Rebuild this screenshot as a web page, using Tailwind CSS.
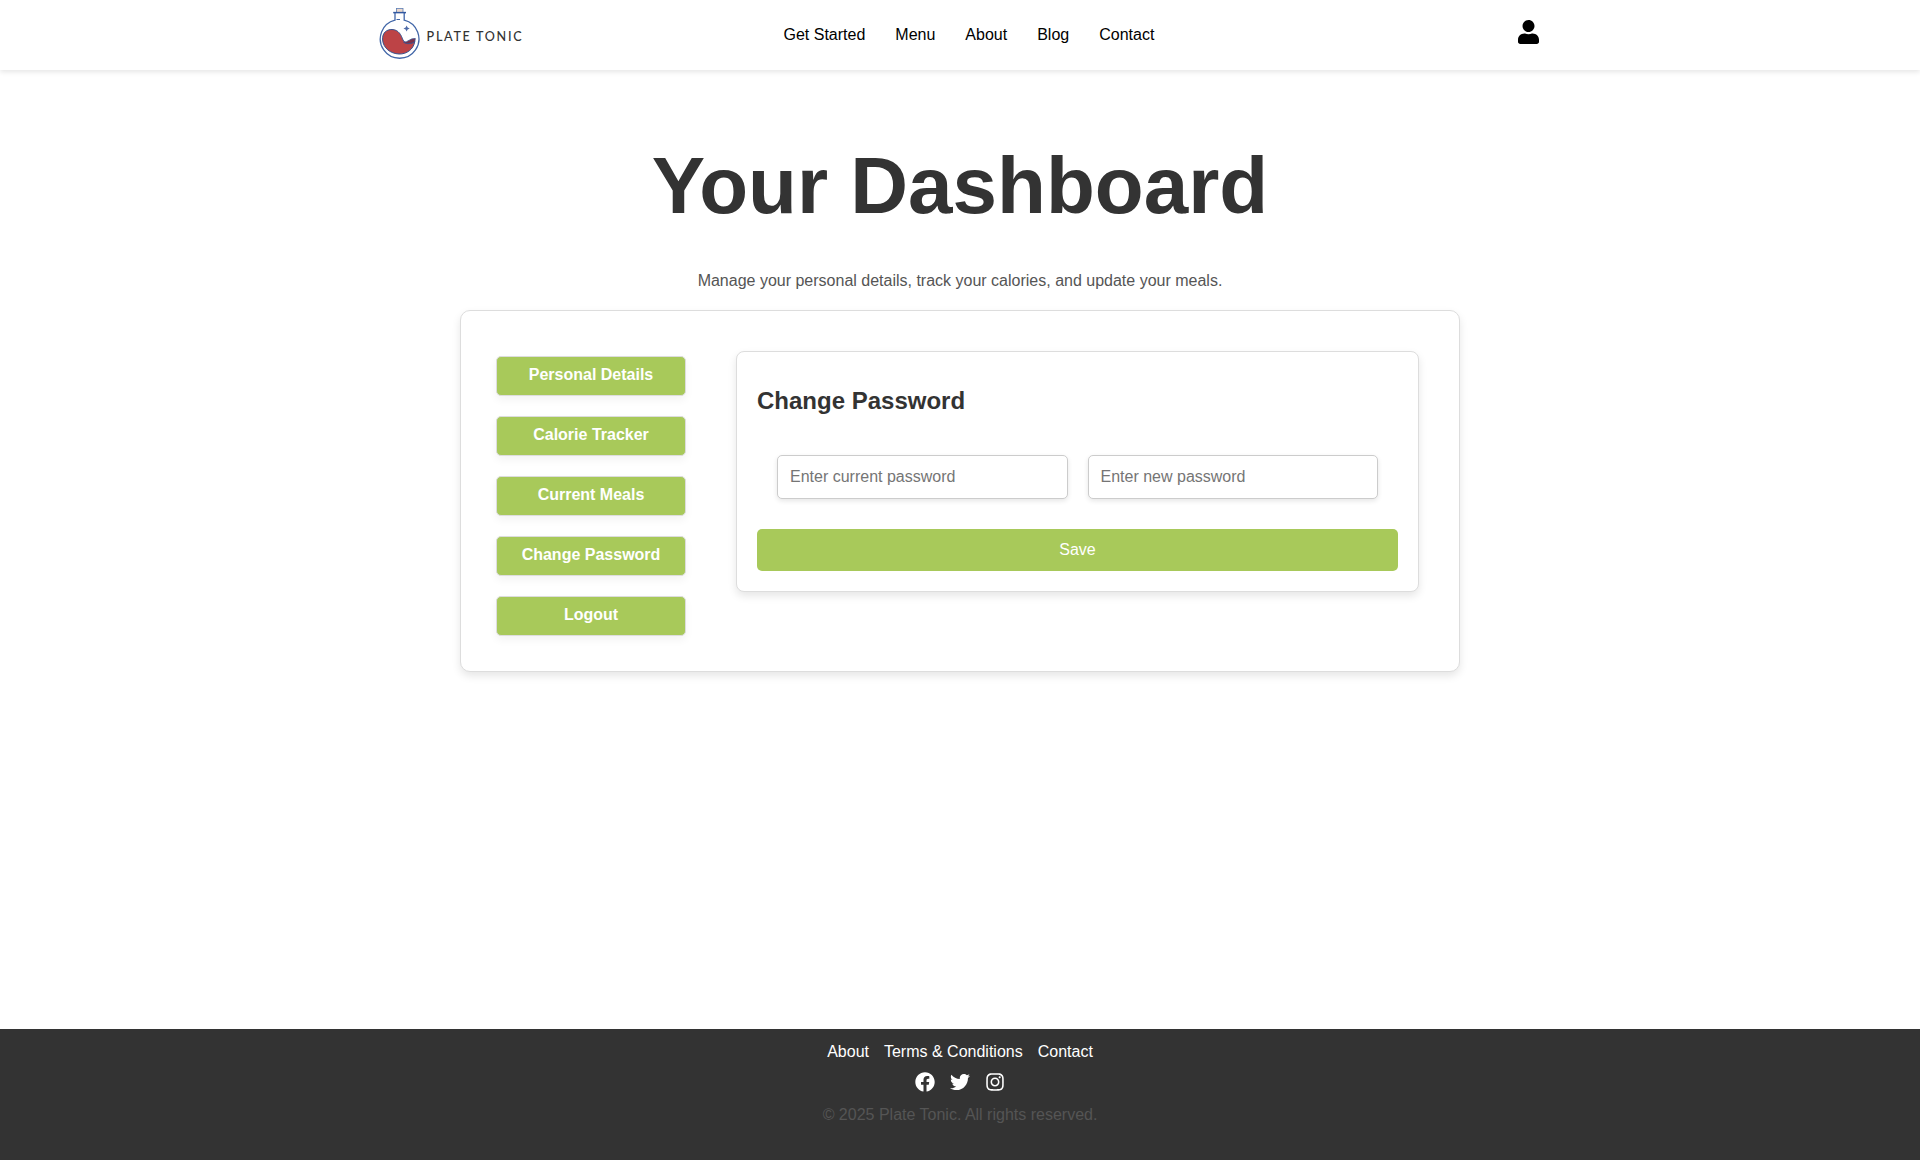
<!DOCTYPE html>
<html lang="en">
<head>
<meta charset="utf-8">
<title>Plate Tonic - Your Dashboard</title>
<script src="https://cdn.jsdelivr.net/npm/@tailwindcss/browser@4"></script>
</head>
<body class="flex min-h-screen flex-col bg-white font-['Liberation_Sans',Arial,sans-serif] text-base text-[#333]">
<header class="h-[70px] bg-white shadow-[0_2px_5px_rgba(0,0,0,0.1)]">
  <div class="mx-auto grid h-full w-[1162px] grid-cols-[404.5px_1fr_23.5px]">
    <a class="flex items-start pt-[7px]" href="#">
      <svg class="h-[52px] w-[146px]" viewBox="0 0 146 52" fill="none">
        <path d="M16 5.500V13.200A19.300 19.300 0 1 0 25.200 13.200V5.500" stroke="#4166a8" stroke-width="1.300"/>
        <rect x="17.400" y="1.500" width="6.600" height="4" fill="#ead8cc" stroke="#5c7eb5" stroke-width=".8"/>
        <path d="M14.200 5.600H27" stroke="#3158a0" stroke-width="1.500"/>
        <path d="M17.500 12.500H21" stroke="#4166a8" stroke-width="1"/>
        <path d="M3.600 33C3 25.500 8 22.300 13 22.500C20 22.800 22 28 24 33C26 37 31 37.500 35.800 34.500C34.500 42.500 27.500 47.300 20 47C11.500 46.700 4.200 41 3.600 33Z" fill="#bd4346" stroke="#39538f" stroke-width="1"/>
        <path d="M24.500 35.200C29 35.500 31 31 36.300 31.500L35.800 34.700C32 37 28 37.500 24.500 35.200Z" fill="#7d3149" stroke="#39538f" stroke-width=".8"/>
        <path d="M27.600 18.500L28.600 20.500L30.700 21.500L28.600 22.500L27.600 24.500L26.600 22.500L24.500 21.500L26.600 20.500Z" fill="#4f6ba8"/>
        <text transform="translate(47.600 34) scale(.9 1)" textLength="105.500" lengthAdjust="spacing" font-family="Lato, sans-serif" font-size="14" font-weight="500" fill="#333">PLATE TONIC</text>
      </svg>
    </a>
    <nav class="flex items-center gap-[30px] pb-px text-black">
      <a href="#">Get Started</a><a href="#">Menu</a><a href="#">About</a><a href="#">Blog</a><a href="#">Contact</a>
    </nav>
    <a href="#" class="pt-5" aria-label="Account">
      <svg class="h-6 w-[21px]" viewBox="0 0 448 512" fill="#000"><path d="M224 256c70.700 0 128-57.300 128-128S294.700 0 224 0 96 57.300 96 128s57.300 128 128 128zm89.600 32h-16.700c-22.200 10.200-46.900 16-72.900 16s-50.600-5.800-72.900-16h-16.700C60.200 288 0 348.200 0 422.400V464c0 26.500 21.500 48 48 48h352c26.500 0 48-21.500 48-48v-41.600c0-74.200-60.200-134.400-134.400-134.400z"/></svg>
    </a>
  </div>
</header>
<main class="flex grow flex-col items-center pt-[70px]">
  <h1 class="text-[80px] leading-[92px] font-bold">Your Dashboard</h1>
  <p class="mt-[40px] leading-[18px] text-[#555]">Manage your personal details, track your calories, and update your meals.</p>
  <section class="mt-[20px] flex h-[362px] w-[1000px] items-start rounded-[10px] border border-[#ddd] bg-white pt-10 pr-10 pl-[35px] shadow-[0_4px_8px_rgba(0,0,0,0.1)]">
    <nav class="mt-[5px] flex w-[190px] flex-col gap-5 text-center font-bold text-white">
      <a href="#" class="h-10 rounded-[5px] border border-[#ddd] bg-[#a8c95a] leading-[36px] shadow-[0_4px_8px_rgba(0,0,0,0.05)]">Personal Details</a>
      <a href="#" class="h-10 rounded-[5px] border border-[#ddd] bg-[#a8c95a] leading-[36px] shadow-[0_4px_8px_rgba(0,0,0,0.05)]">Calorie Tracker</a>
      <a href="#" class="h-10 rounded-[5px] border border-[#ddd] bg-[#a8c95a] leading-[36px] shadow-[0_4px_8px_rgba(0,0,0,0.05)]">Current Meals</a>
      <a href="#" class="h-10 rounded-[5px] border border-[#ddd] bg-[#a8c95a] leading-[36px] shadow-[0_4px_8px_rgba(0,0,0,0.05)]">Change Password</a>
      <a href="#" class="h-10 rounded-[5px] border border-[#ddd] bg-[#a8c95a] leading-[36px] shadow-[0_4px_8px_rgba(0,0,0,0.05)]">Logout</a>
    </nav>
    <form class="ml-[50px] flex h-[241px] w-[683px] flex-col rounded-lg border border-[#ddd] bg-white px-5 pt-[35px] shadow-[0_4px_8px_rgba(0,0,0,0.1)]">
      <h2 class="text-2xl leading-7 font-bold">Change Password</h2>
      <div class="mt-10 flex gap-5 px-5">
        <input type="password" placeholder="Enter current password" class="h-11 min-w-0 flex-1 rounded-[5px] border border-[#ccc] bg-white px-3 placeholder:text-[#757575] shadow-[0_2px_5px_rgba(0,0,0,0.1)]">
        <input type="password" placeholder="Enter new password" class="h-11 min-w-0 flex-1 rounded-[5px] border border-[#ccc] bg-white px-3 placeholder:text-[#757575] shadow-[0_2px_5px_rgba(0,0,0,0.1)]">
      </div>
      <button type="button" class="mt-[30px] h-[42px] rounded-[5px] bg-[#a8c95a] pb-px text-white">Save</button>
    </form>
  </section>
</main>
<footer class="flex h-[131px] flex-col items-center bg-[#333] pt-[14px]">
  <nav class="flex gap-[15px] leading-[18px] text-white"><a href="#">About</a><a href="#">Terms &amp; Conditions</a><a href="#">Contact</a></nav>
  <div class="mt-[11px] flex gap-[15px]">
    <svg class="h-5 w-5" viewBox="0 0 512 512" fill="#fff"><path d="M504 256C504 119 393 8 256 8S8 119 8 256c0 123.780 90.690 226.380 209.250 245V327.690h-63V256h63v-54.640c0-62.150 37-96.480 93.670-96.480 27.140 0 55.520 4.840 55.520 4.840v61h-31.280c-30.800 0-40.410 19.120-40.410 38.730V256h68.780l-11 71.690h-57.780V501C413.310 482.380 504 379.780 504 256z"/></svg>
    <svg class="h-5 w-5" viewBox="0 0 512 512" fill="#fff"><path d="M459.370 151.716c.325 4.548.325 9.097.325 13.645 0 138.720-105.583 298.558-298.558 298.558-59.452 0-114.680-17.219-161.137-47.106 8.447.974 16.568 1.299 25.340 1.299 49.055 0 94.213-16.568 130.274-44.832-46.132-.975-84.792-31.188-98.112-72.772 6.498.974 12.995 1.624 19.818 1.624 9.421 0 18.843-1.300 27.614-3.573-48.081-9.747-84.143-51.980-84.143-102.985v-1.299c13.969 7.797 30.214 12.670 47.431 13.319-28.264-18.843-46.781-51.005-46.781-87.391 0-19.492 5.197-37.360 14.294-52.954 51.655 63.675 129.300 105.258 216.365 109.807-1.624-7.797-2.599-15.918-2.599-24.040 0-57.828 46.782-104.934 104.934-104.934 30.213 0 57.502 12.670 76.670 33.137 23.715-4.548 46.456-13.320 66.599-25.340-7.798 24.366-24.366 44.833-46.132 57.827 21.117-2.273 41.584-8.122 60.426-16.243-14.292 20.791-32.161 39.308-52.628 54.253z"/></svg>
    <svg class="h-5 w-5" viewBox="0 0 448 512" fill="#fff"><path d="M224.100 141c-63.600 0-114.900 51.300-114.900 114.900s51.300 114.900 114.900 114.900S339 319.500 339 255.900 287.700 141 224.100 141zm0 189.600c-41.100 0-74.700-33.500-74.700-74.700s33.500-74.700 74.700-74.700 74.700 33.500 74.700 74.700-33.600 74.700-74.700 74.700zm146.400-194.300c0 14.900-12 26.800-26.800 26.800-14.900 0-26.800-12-26.800-26.800s12-26.800 26.800-26.800 26.800 12 26.800 26.800zm76.100 27.200c-1.700-35.900-9.900-67.700-36.200-93.900-26.200-26.200-58-34.400-93.900-36.200-37-2.100-147.900-2.100-184.900 0-35.800 1.700-67.600 9.900-93.900 36.100s-34.400 58-36.200 93.900c-2.100 37-2.100 147.900 0 184.900 1.700 35.900 9.900 67.700 36.200 93.900s58 34.400 93.900 36.200c37 2.100 147.900 2.100 184.900 0 35.900-1.700 67.700-9.900 93.900-36.200 26.200-26.200 34.400-58 36.200-93.900 2.100-37 2.100-147.800 0-184.800zM398.800 388c-7.800 19.600-22.900 34.700-42.600 42.600-29.500 11.700-99.500 9-132.100 9s-102.700 2.600-132.100-9c-19.600-7.800-34.700-22.900-42.600-42.600-11.700-29.500-9-99.500-9-132.100s-2.600-102.700 9-132.100c7.800-19.600 22.900-34.700 42.600-42.600 29.500-11.700 99.500-9 132.100-9s102.700-2.600 132.100 9c19.600 7.800 34.700 22.900 42.600 42.600 11.700 29.500 9 99.500 9 132.100s2.700 102.700-9 132.100z"/></svg>
  </div>
  <p class="mt-[14px] leading-[18px] text-[#555]">© 2025 Plate Tonic. All rights reserved.</p>
</footer>
</body>
</html>
